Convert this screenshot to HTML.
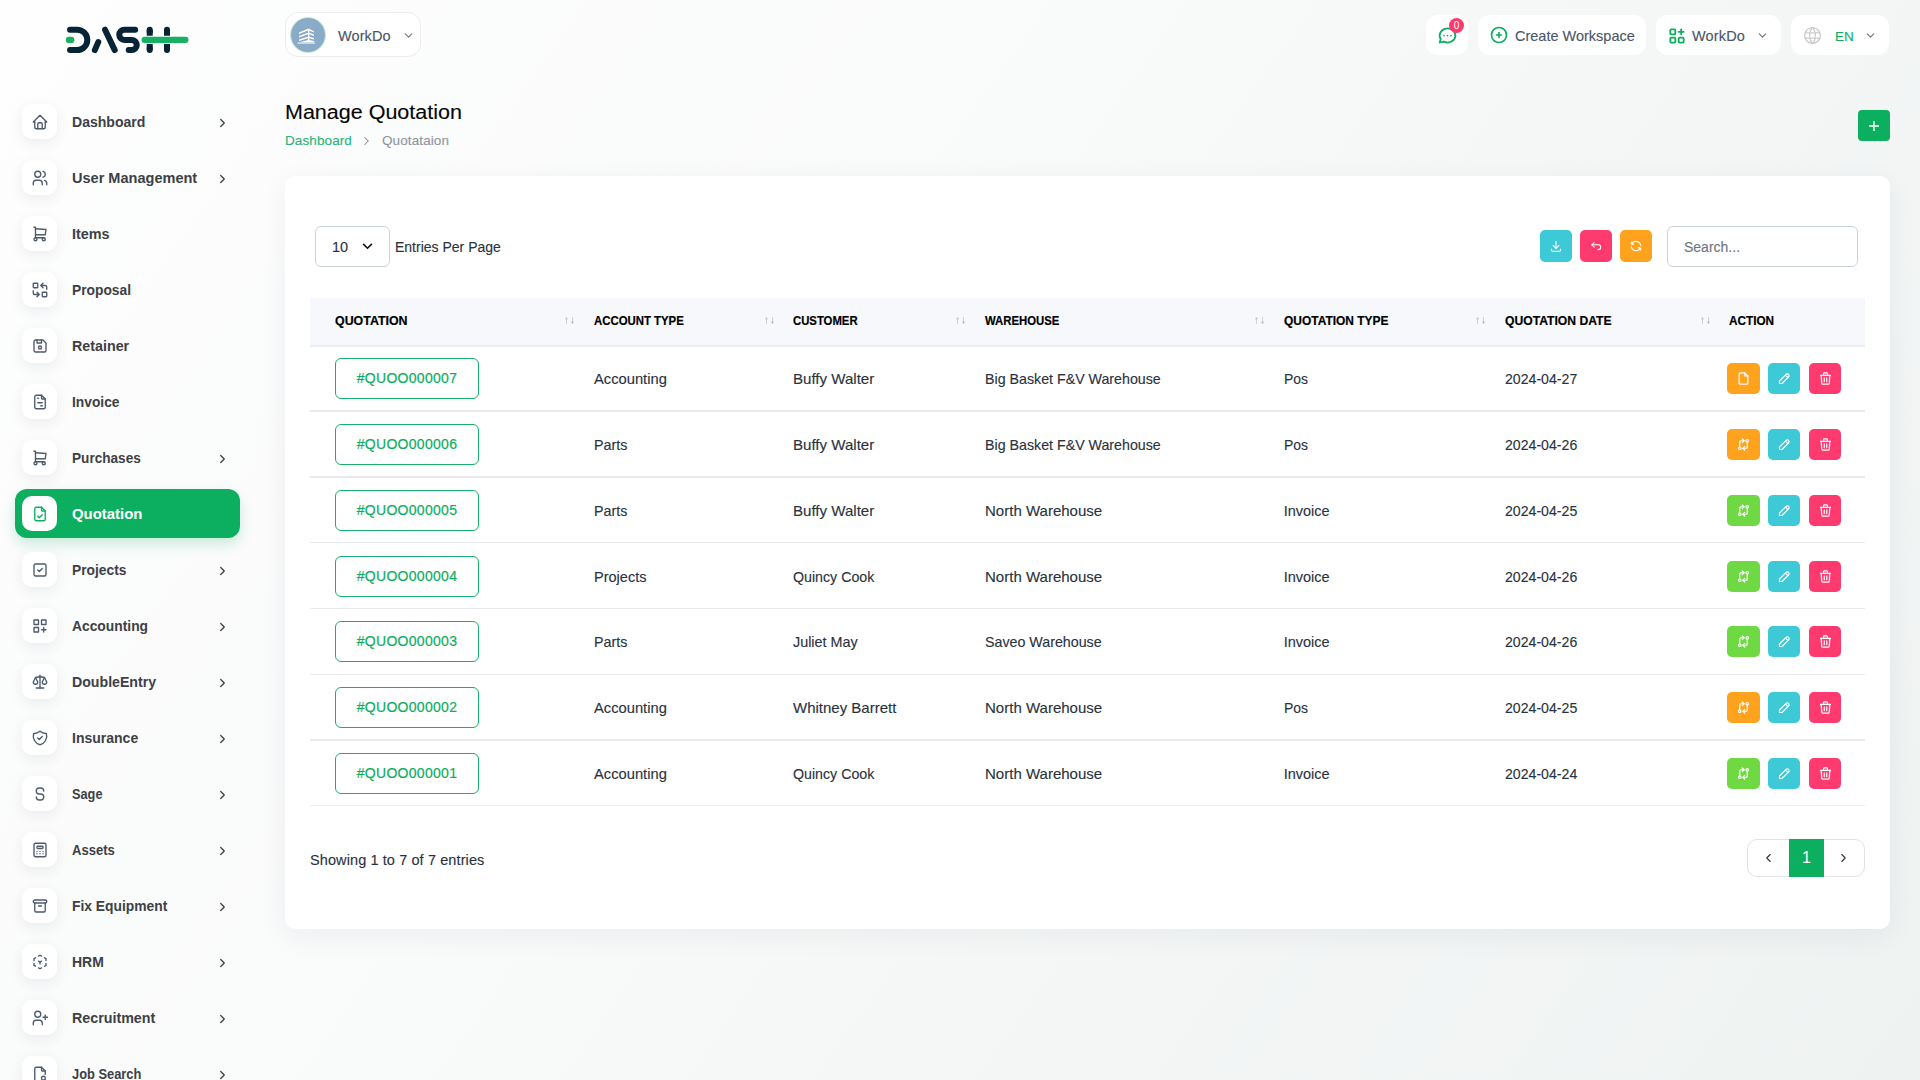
<!DOCTYPE html>
<html><head><meta charset="utf-8">
<style>
*{box-sizing:border-box;margin:0;padding:0}
html,body{width:1920px;height:1080px;overflow:hidden}
body{font-family:"Liberation Sans",sans-serif;color:#293240;position:relative;
background:linear-gradient(125deg,#fefefe 0%,#f9fafa 40%,#eef2f1 100%);}
svg.i{fill:none;stroke:currentColor;stroke-linecap:round;stroke-linejoin:round}
.nav{position:absolute;left:15px;width:225px;height:49px;border-radius:12px}
.nav .ib{position:absolute;left:7px;top:7px;width:35px;height:35px;border-radius:10px;background:#fff;
box-shadow:0 4px 14px rgba(60,70,90,.09);color:#4e5a6e}
.nav .ib svg{position:absolute;left:8.5px;top:8.5px;width:18px;height:18px;stroke-width:1.8}
.nav .t{position:absolute;left:57px;top:-0.5px;line-height:49px;font-size:15px;font-weight:700;color:#3d4046;letter-spacing:0;white-space:nowrap;transform-origin:0 0}
.nav .ch{position:absolute;left:204px;top:21px;width:7px;height:10px;color:#3a3d42;stroke-width:2.2}
.nav.act{background:#0cae5f;box-shadow:0 6px 14px rgba(12,174,95,.22)}
.nav.act .ib{color:#0cae5f;box-shadow:none}
.nav.act .t{color:#fff}
.pill{position:absolute;background:#fff;border-radius:12px;height:40px;top:15px}
.card{position:absolute;left:285px;top:176px;width:1605px;height:753px;background:#fff;border-radius:10px;
box-shadow:0 6px 30px rgba(30,40,60,.06)}
.th{position:absolute;top:296.5px;height:48px;font-size:13px;font-weight:700;color:#000;-webkit-text-stroke:.2px #000;line-height:48px;letter-spacing:0;white-space:nowrap;transform-origin:0 0}
.sort{position:absolute;top:316px;width:10px;height:9px}
.cell{position:absolute;font-size:14.5px;line-height:18px;color:#293240;-webkit-text-stroke:.12px #293240;letter-spacing:0;white-space:nowrap;transform-origin:0 0}
.badge{position:absolute;left:335px;width:144px;height:41px;border:1.5px solid #16b06a;border-radius:6px;color:#0cae5f;-webkit-text-stroke:.2px #0cae5f;
font-size:14px;line-height:39.5px;text-align:center;letter-spacing:.3px}
.ab{position:absolute;width:32px;height:31px;border-radius:5px}
.ab svg{position:absolute;left:8.5px;top:8px;width:15px;height:15px;stroke:#fff;stroke-width:1.9}
.rl{position:absolute;left:310px;width:1555px;height:1.5px;background:#e8eaee}
.tb{position:absolute;top:230px;width:32px;height:32px;border-radius:5px}
.tb svg{position:absolute;left:9px;top:9px;width:14px;height:14px;stroke:#fff;stroke-width:1.8}
.txt{position:absolute;white-space:nowrap;-webkit-text-stroke-width:.12px}
</style></head><body>
<!-- LOGO -->
<svg style="position:absolute;left:58px;top:18px;width:140px;height:44px" viewBox="0 0 1920 603">
<g fill="none" stroke-linecap="round" stroke-width="82">
<path d="M150 300H182" stroke="#17b163" stroke-width="86"/>
<path d="M165 160H262A140 140 0 0 1 262 440H165" stroke="#062435"/>
<path d="M505 440L552 330" stroke="#062435"/>
<path d="M645 160L778 440" stroke="#062435"/>
<path d="M1058 160H910A70 70 0 0 0 910 300H1010A70 70 0 0 1 1010 440H970" stroke="#062435"/>
<path d="M1258 160V190M1258 410V440M1495 160V190M1495 410V440" stroke="#062435"/>
<path d="M1258 160V242M1258 358V440M1495 160V242M1495 358V440" stroke="#062435" stroke-linecap="butt"/>
</g>
<path d="M1188 300H1748" stroke="#17b163" stroke-width="84" stroke-linecap="round"/>
</svg>
<div class="nav" style="top:97.0px"><div class="ib"><svg class="i" viewBox="0 0 24 24" style=""><path d="M5 12l-2 0l9 -9l9 9l-2 0"/><path d="M5 12v7a2 2 0 0 0 2 2h10a2 2 0 0 0 2 -2v-7"/><path d="M9 21v-6a2 2 0 0 1 2 -2h2a2 2 0 0 1 2 2v6"/></svg></div><div class="t" style="transform:scaleX(0.937)">Dashboard</div><svg class="i ch" viewBox="6 4 12 16"><path d="M9 6l6 6l-6 6"/></svg></div>
<div class="nav" style="top:153.0px"><div class="ib"><svg class="i" viewBox="0 0 24 24" style=""><path d="M5 7a4 4 0 1 0 8 0a4 4 0 1 0 -8 0"/><path d="M3 21v-2a4 4 0 0 1 4 -4h4a4 4 0 0 1 4 4v2"/><path d="M16 3.13a4 4 0 0 1 0 7.75"/><path d="M21 21v-2a4 4 0 0 0 -3 -3.85"/></svg></div><div class="t" style="transform:scaleX(0.969)">User Management</div><svg class="i ch" viewBox="6 4 12 16"><path d="M9 6l6 6l-6 6"/></svg></div>
<div class="nav" style="top:209.0px"><div class="ib"><svg class="i" viewBox="0 0 24 24" style=""><path d="M4 19a2 2 0 1 0 4 0a2 2 0 1 0 -4 0"/><path d="M15 19a2 2 0 1 0 4 0a2 2 0 1 0 -4 0"/><path d="M17 17h-11v-14h-2"/><path d="M6 5l14 1l-1 7h-13"/></svg></div><div class="t" style="transform:scaleX(0.959)">Items</div></div>
<div class="nav" style="top:265.0px"><div class="ib"><svg class="i" viewBox="0 0 24 24" style=""><path d="M4 3h4a1 1 0 0 1 1 1v4a1 1 0 0 1 -1 1h-4a1 1 0 0 1 -1 -1v-4a1 1 0 0 1 1 -1z"/><path d="M16 15h4a1 1 0 0 1 1 1v4a1 1 0 0 1 -1 1h-4a1 1 0 0 1 -1 -1v-4a1 1 0 0 1 1 -1z"/><path d="M21 11v-3a2 2 0 0 0 -2 -2h-6l3 3m0 -6l-3 3"/><path d="M3 13v3a2 2 0 0 0 2 2h6l-3 -3m0 6l3 -3"/></svg></div><div class="t" style="transform:scaleX(0.92)">Proposal</div></div>
<div class="nav" style="top:321.0px"><div class="ib"><svg class="i" viewBox="0 0 24 24" style=""><path d="M6 4h10l4 4v10a2 2 0 0 1 -2 2h-12a2 2 0 0 1 -2 -2v-12a2 2 0 0 1 2 -2"/><path d="M10 14a2 2 0 1 0 4 0a2 2 0 1 0 -4 0"/><path d="M14 4l0 4l-6 0l0 -4"/></svg></div><div class="t" style="transform:scaleX(0.952)">Retainer</div></div>
<div class="nav" style="top:377.0px"><div class="ib"><svg class="i" viewBox="0 0 24 24" style=""><path d="M14 3v4a1 1 0 0 0 1 1h4"/><path d="M17 21h-10a2 2 0 0 1 -2 -2v-14a2 2 0 0 1 2 -2h7l5 5v11a2 2 0 0 1 -2 2z"/><path d="M9 7l1 0"/><path d="M9 13l6 0"/><path d="M13 17l2 0"/></svg></div><div class="t" style="transform:scaleX(0.919)">Invoice</div></div>
<div class="nav" style="top:433.0px"><div class="ib"><svg class="i" viewBox="0 0 24 24" style=""><path d="M4 19a2 2 0 1 0 4 0a2 2 0 1 0 -4 0"/><path d="M15 19a2 2 0 1 0 4 0a2 2 0 1 0 -4 0"/><path d="M17 17h-11v-14h-2"/><path d="M6 5l14 1l-1 7h-13"/></svg></div><div class="t" style="transform:scaleX(0.907)">Purchases</div><svg class="i ch" viewBox="6 4 12 16"><path d="M9 6l6 6l-6 6"/></svg></div>
<div class="nav act" style="top:489.0px"><div class="ib"><svg class="i" viewBox="0 0 24 24" style=""><path d="M14 3v4a1 1 0 0 0 1 1h4"/><path d="M17 21h-10a2 2 0 0 1 -2 -2v-14a2 2 0 0 1 2 -2h7l5 5v11a2 2 0 0 1 -2 2z"/><path d="M9 15l2 2l4 -4"/></svg></div><div class="t" style="transform:scaleX(0.994)">Quotation</div></div>
<div class="nav" style="top:545.0px"><div class="ib"><svg class="i" viewBox="0 0 24 24" style=""><path d="M6 4h12a2 2 0 0 1 2 2v12a2 2 0 0 1 -2 2h-12a2 2 0 0 1 -2 -2v-12a2 2 0 0 1 2 -2z"/><path d="M9 12l2 2l4 -4"/></svg></div><div class="t" style="transform:scaleX(0.919)">Projects</div><svg class="i ch" viewBox="6 4 12 16"><path d="M9 6l6 6l-6 6"/></svg></div>
<div class="nav" style="top:601.0px"><div class="ib"><svg class="i" viewBox="0 0 24 24" style=""><path d="M4 4h6v6h-6z"/><path d="M14 4h6v6h-6z"/><path d="M4 14h6v6h-6z"/><path d="M17 14v6"/><path d="M14 17h6"/></svg></div><div class="t" style="transform:scaleX(0.922)">Accounting</div><svg class="i ch" viewBox="6 4 12 16"><path d="M9 6l6 6l-6 6"/></svg></div>
<div class="nav" style="top:657.0px"><div class="ib"><svg class="i" viewBox="0 0 24 24" style=""><path d="M7 20l10 0"/><path d="M6 6l6 -1l6 1"/><path d="M12 3l0 17"/><path d="M9 12l-3 -6l-3 6a3 3 0 0 0 6 0"/><path d="M21 12l-3 -6l-3 6a3 3 0 0 0 6 0"/></svg></div><div class="t" style="transform:scaleX(0.943)">DoubleEntry</div><svg class="i ch" viewBox="6 4 12 16"><path d="M9 6l6 6l-6 6"/></svg></div>
<div class="nav" style="top:713.0px"><div class="ib"><svg class="i" viewBox="0 0 24 24" style=""><path d="M9 12l2 2l4 -4"/><path d="M12 3a12 12 0 0 0 8.5 3a12 12 0 0 1 -8.5 15a12 12 0 0 1 -8.5 -15a12 12 0 0 0 8.5 -3"/></svg></div><div class="t" style="transform:scaleX(0.934)">Insurance</div><svg class="i ch" viewBox="6 4 12 16"><path d="M9 6l6 6l-6 6"/></svg></div>
<div class="nav" style="top:769.0px"><div class="ib"><svg class="i" viewBox="0 0 24 24" style=""><path d="M17 8a4 4 0 0 0 -4 -4h-2a4 4 0 0 0 0 8h2a4 4 0 0 1 0 8h-2a4 4 0 0 1 -4 -4"/></svg></div><div class="t" style="transform:scaleX(0.85)">Sage</div><svg class="i ch" viewBox="6 4 12 16"><path d="M9 6l6 6l-6 6"/></svg></div>
<div class="nav" style="top:825.0px"><div class="ib"><svg class="i" viewBox="0 0 24 24" style=""><path d="M6 3h12a2 2 0 0 1 2 2v14a2 2 0 0 1 -2 2h-12a2 2 0 0 1 -2 -2v-14a2 2 0 0 1 2 -2z"/><path d="M9 7h6a1 1 0 0 1 1 1v1a1 1 0 0 1 -1 1h-6a1 1 0 0 1 -1 -1v-1a1 1 0 0 1 1 -1z"/><path d="M8 14l0 .01"/><path d="M12 14l0 .01"/><path d="M16 14l0 .01"/><path d="M8 17l0 .01"/><path d="M12 17l0 .01"/><path d="M16 17l0 .01"/></svg></div><div class="t" style="transform:scaleX(0.871)">Assets</div><svg class="i ch" viewBox="6 4 12 16"><path d="M9 6l6 6l-6 6"/></svg></div>
<div class="nav" style="top:881.0px"><div class="ib"><svg class="i" viewBox="0 0 24 24" style=""><path d="M5 4h14a2 2 0 0 1 2 2a2 2 0 0 1 -2 2h-14a2 2 0 0 1 -2 -2a2 2 0 0 1 2 -2z"/><path d="M5 8v10a2 2 0 0 0 2 2h10a2 2 0 0 0 2 -2v-10"/><path d="M10 12l4 0"/></svg></div><div class="t" style="transform:scaleX(0.923)">Fix Equipment</div><svg class="i ch" viewBox="6 4 12 16"><path d="M9 6l6 6l-6 6"/></svg></div>
<div class="nav" style="top:937.0px"><div class="ib"><svg class="i" viewBox="0 0 24 24" style=""><path d="M6 17.6l-2 -1.1v-2.5"/><path d="M4 10v-2.5l2 -1.1"/><path d="M10 4.1l2 -1.1l2 1.1"/><path d="M18 6.4l2 1.1v2.5"/><path d="M20 14v2.5l-2 1.12"/><path d="M14 19.9l-2 1.1l-2 -1.1"/><path d="M12 12l2 -1.1"/><path d="M12 12l0 2.5"/><path d="M12 12l-2 -1.12"/></svg></div><div class="t" style="transform:scaleX(0.932)">HRM</div><svg class="i ch" viewBox="6 4 12 16"><path d="M9 6l6 6l-6 6"/></svg></div>
<div class="nav" style="top:993.0px"><div class="ib"><svg class="i" viewBox="0 0 24 24" style=""><path d="M5 7a4 4 0 1 0 8 0a4 4 0 1 0 -8 0"/><path d="M3 21v-2a4 4 0 0 1 4 -4h4a4 4 0 0 1 4 4v2"/><path d="M16 11h6m-3 -3v6"/></svg></div><div class="t" style="transform:scaleX(0.951)">Recruitment</div><svg class="i ch" viewBox="6 4 12 16"><path d="M9 6l6 6l-6 6"/></svg></div>
<div class="nav" style="top:1049.0px"><div class="ib"><svg class="i" viewBox="0 0 24 24" style=""><path d="M14 3v4a1 1 0 0 0 1 1h4"/><path d="M12 21h-5a2 2 0 0 1 -2 -2v-14a2 2 0 0 1 2 -2h7l5 5v4.5"/><path d="M14 17.5a2.5 2.5 0 1 0 5 0a2.5 2.5 0 1 0 -5 0"/><path d="M18.5 19.5l2.5 2.5"/></svg></div><div class="t" style="transform:scaleX(0.857)">Job Search</div><svg class="i ch" viewBox="6 4 12 16"><path d="M9 6l6 6l-6 6"/></svg></div>
<!-- workspace -->
<div class="pill" style="left:285px;top:12px;width:136px;height:45px;border:1px solid #ececec;border-radius:13px"></div>
<div style="position:absolute;left:291px;top:18px;width:34px;height:34px;border-radius:50%;background:#8aabc7;box-shadow:0 0 0 1px #c9ecd6">
<svg viewBox="0 0 34 34" style="position:absolute;left:0;top:0;width:34px;height:34px"><g fill="#fff">
<path d="M8 14.5L17.5 10.5L23 13.2V14.6L17.5 12.2L8 16Z"/><path d="M8 18L17.5 14.5L23 16.5V17.9L17.5 15.9L8 19.5Z"/>
<path d="M8 21.5L17.5 18.5L23 20V21.4L17.5 19.9L8 23Z"/><path d="M7.5 24.5L17.5 22L23 23V24.2H7.5Z"/>
<rect x="17" y="11" width="1.3" height="13" /><rect x="6.5" y="24.3" width="17.5" height="1.6" opacity=".6"/></g></svg></div>
<div class="txt" style="left:338px;top:28px;font-size:14.5px;color:#4a5568;letter-spacing:.1px">WorkDo</div>
<svg class="i" viewBox="0 0 24 24" style="position:absolute;left:402px;top:29px;width:13px;height:13px;color:#6b7280;stroke-width:2"><path d="M6 9l6 6l6 -6"/></svg>
<!-- right header -->
<div class="pill" style="left:1426px;width:42px"></div>
<svg class="i" viewBox="0 0 24 24" style="position:absolute;left:1437px;top:25px;width:21px;height:21px;color:#0cae5f;stroke-width:2"><path d="M3 20l1.3 -3.9a9 8 0 1 1 3.4 2.9l-4.7 1"/><path d="M12 12l0 .01"/><path d="M8 12l0 .01"/><path d="M16 12l0 .01"/></svg>
<div style="position:absolute;left:1449px;top:17.5px;width:15px;height:15px;border-radius:50%;background:#ff3a6e;color:#fff;font-size:10px;line-height:15px;text-align:center">0</div>
<div class="pill" style="left:1478px;width:168px"></div>
<svg class="i" viewBox="0 0 24 24" style="position:absolute;left:1489px;top:25px;width:20px;height:20px;color:#0cae5f;stroke-width:2"><path d="M3 12a9 9 0 1 0 18 0a9 9 0 0 0 -18 0"/><path d="M9 12h6"/><path d="M12 9v6"/></svg>
<div class="txt" style="left:1515px;top:28px;font-size:14.5px;color:#4a5568;letter-spacing:0">Create Workspace</div>
<div class="pill" style="left:1656px;width:125px"></div>
<svg class="i" viewBox="0 0 24 24" style="position:absolute;left:1667px;top:26px;width:20px;height:20px;color:#0cae5f;stroke-width:2.2"><path d="M5 4h4a1 1 0 0 1 1 1v4a1 1 0 0 1 -1 1h-4a1 1 0 0 1 -1 -1v-4a1 1 0 0 1 1 -1z"/><path d="M5 14h4a1 1 0 0 1 1 1v4a1 1 0 0 1 -1 1h-4a1 1 0 0 1 -1 -1v-4a1 1 0 0 1 1 -1z"/><path d="M15 14h4a1 1 0 0 1 1 1v4a1 1 0 0 1 -1 1h-4a1 1 0 0 1 -1 -1v-4a1 1 0 0 1 1 -1z"/><path d="M14 7l6 0"/><path d="M17 4l0 6"/></svg>
<div class="txt" style="left:1692px;top:28px;font-size:14.5px;color:#4a5568;letter-spacing:.15px">WorkDo</div>
<svg class="i" viewBox="0 0 24 24" style="position:absolute;left:1756px;top:29px;width:13px;height:13px;color:#6b7280;stroke-width:2"><path d="M6 9l6 6l6 -6"/></svg>
<div class="pill" style="left:1791px;width:98px"></div>
<svg class="i" viewBox="0 0 24 24" style="position:absolute;left:1801.5px;top:25px;width:21px;height:21px;color:#cbcbcb;stroke-width:1.5"><path d="M3 12a9 9 0 1 0 18 0a9 9 0 0 0 -18 0"/><path d="M3.6 9h16.8"/><path d="M3.6 15h16.8"/><path d="M11.5 3a17 17 0 0 0 0 18"/><path d="M12.5 3a17 17 0 0 1 0 18"/></svg>
<div class="txt" style="left:1835px;top:28.5px;font-size:13.5px;color:#0cae5f">EN</div>
<svg class="i" viewBox="0 0 24 24" style="position:absolute;left:1864px;top:29px;width:13px;height:13px;color:#6b7280;stroke-width:2"><path d="M6 9l6 6l6 -6"/></svg>
<!-- title -->
<div class="txt" style="left:285px;top:101px;font-size:20px;color:#060606;letter-spacing:0;transform:scaleX(1.075);transform-origin:0 0">Manage Quotation</div>
<div class="txt" style="left:285px;top:133px;font-size:13.5px;color:#27b478;letter-spacing:.1px">Dashboard</div>
<svg class="i" viewBox="6 4 12 16" style="position:absolute;left:363px;top:136px;width:7px;height:10px;color:#7e8793;stroke-width:1.8"><path d="M9 6l6 6l-6 6"/></svg>
<div class="txt" style="left:382px;top:133px;font-size:13.5px;color:#8e96a2;letter-spacing:.1px">Quotataion</div>
<div style="position:absolute;left:1858px;top:110px;width:32px;height:31px;border-radius:4px;background:#0cae5f">
<svg viewBox="0 0 10 10" style="position:absolute;left:11px;top:10.5px;width:10px;height:10px"><path d="M5 0V10M0 5H10" stroke="#fff" stroke-width="1.4"/></svg></div>
<!-- card -->
<div class="card"></div>
<div style="position:absolute;left:315px;top:226px;width:75px;height:41px;border:1px solid #cdd3db;border-radius:6px"></div>
<div class="txt" style="left:332px;top:239px;font-size:14.5px;color:#293240">10</div>
<svg viewBox="0 0 12 8" style="position:absolute;left:362px;top:243px;width:11px;height:7px"><path d="M1 1L6 6L11 1" stroke="#111" stroke-width="1.8" fill="none"/></svg>
<div class="txt" style="left:395px;top:239px;font-size:14px;color:#293240;letter-spacing:0">Entries Per Page</div>
<div class="tb" style="left:1540px;background:#3ec9d6"><svg class="i" viewBox="0 0 24 24" style=""><path d="M4 17v2a2 2 0 0 0 2 2h12a2 2 0 0 0 2 -2v-2"/><path d="M7 11l5 5l5 -5"/><path d="M12 4l0 12"/></svg></div>
<div class="tb" style="left:1580px;background:#ff3a6e"><svg class="i" viewBox="0 0 24 24" style=""><path d="M9 14l-4 -4l4 -4"/><path d="M5 10h11a4 4 0 1 1 0 8h-1"/></svg></div>
<div class="tb" style="left:1620px;background:#ffa21d"><svg class="i" viewBox="0 0 24 24" style=""><path d="M20 11a8.1 8.1 0 0 0 -15.5 -2m-.5 -4v4h4"/><path d="M4 13a8.1 8.1 0 0 0 15.5 2m.5 4v-4h-4"/></svg></div>
<div style="position:absolute;left:1667px;top:226px;width:191px;height:41px;border:1px solid #cdd3db;border-radius:6px"></div>
<div class="txt" style="left:1684px;top:239px;font-size:14px;color:#6c7683;letter-spacing:0">Search...</div>
<div style="position:absolute;left:310px;top:298px;width:1555px;height:48px;background:#f7f8fb"></div>
<div style="position:absolute;left:310px;top:345px;width:1555px;height:1.5px;background:#eceef2"></div>
<div class="th" style="left:335.3px;transform:scaleX(0.954)">QUOTATION</div>
<svg class="sort" style="left:565px" viewBox="0 0 10 9"><path d="M1.5 3V8" stroke="#cfd2d8" stroke-width="1"/><path d="M-0.2 3.2L1.5 1L3.2 3.2Z" fill="#c2c5cc"/><path d="M7.5 1V6" stroke="#cfd2d8" stroke-width="1"/><path d="M5.8 5.8L7.5 8L9.2 5.8Z" fill="#b4b8c0"/></svg>
<div class="th" style="left:593.6px;transform:scaleX(0.875)">ACCOUNT TYPE</div>
<svg class="sort" style="left:764.5px" viewBox="0 0 10 9"><path d="M1.5 3V8" stroke="#cfd2d8" stroke-width="1"/><path d="M-0.2 3.2L1.5 1L3.2 3.2Z" fill="#c2c5cc"/><path d="M7.5 1V6" stroke="#cfd2d8" stroke-width="1"/><path d="M5.8 5.8L7.5 8L9.2 5.8Z" fill="#b4b8c0"/></svg>
<div class="th" style="left:793.3px;transform:scaleX(0.871)">CUSTOMER</div>
<svg class="sort" style="left:955.7px" viewBox="0 0 10 9"><path d="M1.5 3V8" stroke="#cfd2d8" stroke-width="1"/><path d="M-0.2 3.2L1.5 1L3.2 3.2Z" fill="#c2c5cc"/><path d="M7.5 1V6" stroke="#cfd2d8" stroke-width="1"/><path d="M5.8 5.8L7.5 8L9.2 5.8Z" fill="#b4b8c0"/></svg>
<div class="th" style="left:984.6px;transform:scaleX(0.871)">WAREHOUSE</div>
<svg class="sort" style="left:1254.6px" viewBox="0 0 10 9"><path d="M1.5 3V8" stroke="#cfd2d8" stroke-width="1"/><path d="M-0.2 3.2L1.5 1L3.2 3.2Z" fill="#c2c5cc"/><path d="M7.5 1V6" stroke="#cfd2d8" stroke-width="1"/><path d="M5.8 5.8L7.5 8L9.2 5.8Z" fill="#b4b8c0"/></svg>
<div class="th" style="left:1283.7px;transform:scaleX(0.920)">QUOTATION TYPE</div>
<svg class="sort" style="left:1475.9px" viewBox="0 0 10 9"><path d="M1.5 3V8" stroke="#cfd2d8" stroke-width="1"/><path d="M-0.2 3.2L1.5 1L3.2 3.2Z" fill="#c2c5cc"/><path d="M7.5 1V6" stroke="#cfd2d8" stroke-width="1"/><path d="M5.8 5.8L7.5 8L9.2 5.8Z" fill="#b4b8c0"/></svg>
<div class="th" style="left:1504.8px;transform:scaleX(0.934)">QUOTATION DATE</div>
<svg class="sort" style="left:1700.6px" viewBox="0 0 10 9"><path d="M1.5 3V8" stroke="#cfd2d8" stroke-width="1"/><path d="M-0.2 3.2L1.5 1L3.2 3.2Z" fill="#c2c5cc"/><path d="M7.5 1V6" stroke="#cfd2d8" stroke-width="1"/><path d="M5.8 5.8L7.5 8L9.2 5.8Z" fill="#b4b8c0"/></svg>
<div class="th" style="left:1729.3px;transform:scaleX(0.904)">ACTION</div>
<div class="badge" style="top:358.10px">#QUOO000007</div>
<div class="cell" style="left:593.6px;top:370.40px;transform:scaleX(1.015)">Accounting</div>
<div class="cell" style="left:793.3px;top:370.40px;transform:scaleX(1.039)">Buffy Walter</div>
<div class="cell" style="left:984.6px;top:370.40px;transform:scaleX(0.981)">Big Basket F&amp;V Warehouse</div>
<div class="cell" style="left:1283.7px;top:370.40px;transform:scaleX(0.962)">Pos</div>
<div class="cell" style="left:1504.8px;top:370.40px;transform:scaleX(0.974)">2024-04-27</div>
<div class="ab" style="left:1727px;top:363.10px;width:33px;background:#ffa21d"><svg class="i" viewBox="0 0 24 24" style=""><path d="M14 3v4a1 1 0 0 0 1 1h4"/><path d="M17 21h-10a2 2 0 0 1 -2 -2v-14a2 2 0 0 1 2 -2h7l5 5v11a2 2 0 0 1 -2 2z"/></svg></div>
<div class="ab" style="left:1768px;top:363.10px;width:32px;background:#3ec9d6"><svg class="i" viewBox="0 0 24 24" style=""><path d="M4 20h4l10.5 -10.5a2.828 2.828 0 1 0 -4 -4l-10.5 10.5v4"/><path d="M13.5 6.5l4 4"/></svg></div>
<div class="ab" style="left:1809px;top:363.10px;width:32px;background:#ff3a6e"><svg class="i" viewBox="0 0 24 24" style=""><path d="M4 7l16 0"/><path d="M10 11l0 6"/><path d="M14 11l0 6"/><path d="M5 7l1 12a2 2 0 0 0 2 2h8a2 2 0 0 0 2 -2l1 -12"/><path d="M9 7v-3a1 1 0 0 1 1 -1h4a1 1 0 0 1 1 1v3"/></svg></div>
<div class="rl" style="top:410.30px"></div>
<div class="badge" style="top:423.90px">#QUOO000006</div>
<div class="cell" style="left:593.6px;top:436.12px;transform:scaleX(0.985)">Parts</div>
<div class="cell" style="left:793.3px;top:436.12px;transform:scaleX(1.039)">Buffy Walter</div>
<div class="cell" style="left:984.6px;top:436.12px;transform:scaleX(0.981)">Big Basket F&amp;V Warehouse</div>
<div class="cell" style="left:1283.7px;top:436.12px;transform:scaleX(0.962)">Pos</div>
<div class="cell" style="left:1504.8px;top:436.12px;transform:scaleX(0.974)">2024-04-26</div>
<div class="ab" style="left:1727px;top:428.90px;width:33px;background:#ffa21d"><svg class="i" viewBox="0 0 24 24" style=""><g transform="translate(24 0) scale(-1 1)"><path d="M4 6a2 2 0 1 0 4 0a2 2 0 1 0 -4 0"/><path d="M16 18a2 2 0 1 0 4 0a2 2 0 1 0 -4 0"/><path d="M11 6h5a2 2 0 0 1 2 2v8"/><path d="M14 9l-3 -3l3 -3"/><path d="M13 18h-5a2 2 0 0 1 -2 -2v-8"/><path d="M10 15l3 3l-3 3"/></g></svg></div>
<div class="ab" style="left:1768px;top:428.90px;width:32px;background:#3ec9d6"><svg class="i" viewBox="0 0 24 24" style=""><path d="M4 20h4l10.5 -10.5a2.828 2.828 0 1 0 -4 -4l-10.5 10.5v4"/><path d="M13.5 6.5l4 4"/></svg></div>
<div class="ab" style="left:1809px;top:428.90px;width:32px;background:#ff3a6e"><svg class="i" viewBox="0 0 24 24" style=""><path d="M4 7l16 0"/><path d="M10 11l0 6"/><path d="M14 11l0 6"/><path d="M5 7l1 12a2 2 0 0 0 2 2h8a2 2 0 0 0 2 -2l1 -12"/><path d="M9 7v-3a1 1 0 0 1 1 -1h4a1 1 0 0 1 1 1v3"/></svg></div>
<div class="rl" style="top:476.10px"></div>
<div class="badge" style="top:489.70px">#QUOO000005</div>
<div class="cell" style="left:593.6px;top:501.84px;transform:scaleX(0.985)">Parts</div>
<div class="cell" style="left:793.3px;top:501.84px;transform:scaleX(1.039)">Buffy Walter</div>
<div class="cell" style="left:984.6px;top:501.84px;transform:scaleX(1.036)">North Warehouse</div>
<div class="cell" style="left:1283.7px;top:501.84px;transform:scaleX(1.0)">Invoice</div>
<div class="cell" style="left:1504.8px;top:501.84px;transform:scaleX(0.974)">2024-04-25</div>
<div class="ab" style="left:1727px;top:494.70px;width:33px;background:#6fd943"><svg class="i" viewBox="0 0 24 24" style=""><g transform="translate(24 0) scale(-1 1)"><path d="M4 6a2 2 0 1 0 4 0a2 2 0 1 0 -4 0"/><path d="M16 18a2 2 0 1 0 4 0a2 2 0 1 0 -4 0"/><path d="M11 6h5a2 2 0 0 1 2 2v8"/><path d="M14 9l-3 -3l3 -3"/><path d="M13 18h-5a2 2 0 0 1 -2 -2v-8"/><path d="M10 15l3 3l-3 3"/></g></svg></div>
<div class="ab" style="left:1768px;top:494.70px;width:32px;background:#3ec9d6"><svg class="i" viewBox="0 0 24 24" style=""><path d="M4 20h4l10.5 -10.5a2.828 2.828 0 1 0 -4 -4l-10.5 10.5v4"/><path d="M13.5 6.5l4 4"/></svg></div>
<div class="ab" style="left:1809px;top:494.70px;width:32px;background:#ff3a6e"><svg class="i" viewBox="0 0 24 24" style=""><path d="M4 7l16 0"/><path d="M10 11l0 6"/><path d="M14 11l0 6"/><path d="M5 7l1 12a2 2 0 0 0 2 2h8a2 2 0 0 0 2 -2l1 -12"/><path d="M9 7v-3a1 1 0 0 1 1 -1h4a1 1 0 0 1 1 1v3"/></svg></div>
<div class="rl" style="top:541.90px"></div>
<div class="badge" style="top:555.50px">#QUOO000004</div>
<div class="cell" style="left:593.6px;top:567.56px;transform:scaleX(1.002)">Projects</div>
<div class="cell" style="left:793.3px;top:567.56px;transform:scaleX(0.98)">Quincy Cook</div>
<div class="cell" style="left:984.6px;top:567.56px;transform:scaleX(1.036)">North Warehouse</div>
<div class="cell" style="left:1283.7px;top:567.56px;transform:scaleX(1.0)">Invoice</div>
<div class="cell" style="left:1504.8px;top:567.56px;transform:scaleX(0.974)">2024-04-26</div>
<div class="ab" style="left:1727px;top:560.50px;width:33px;background:#6fd943"><svg class="i" viewBox="0 0 24 24" style=""><g transform="translate(24 0) scale(-1 1)"><path d="M4 6a2 2 0 1 0 4 0a2 2 0 1 0 -4 0"/><path d="M16 18a2 2 0 1 0 4 0a2 2 0 1 0 -4 0"/><path d="M11 6h5a2 2 0 0 1 2 2v8"/><path d="M14 9l-3 -3l3 -3"/><path d="M13 18h-5a2 2 0 0 1 -2 -2v-8"/><path d="M10 15l3 3l-3 3"/></g></svg></div>
<div class="ab" style="left:1768px;top:560.50px;width:32px;background:#3ec9d6"><svg class="i" viewBox="0 0 24 24" style=""><path d="M4 20h4l10.5 -10.5a2.828 2.828 0 1 0 -4 -4l-10.5 10.5v4"/><path d="M13.5 6.5l4 4"/></svg></div>
<div class="ab" style="left:1809px;top:560.50px;width:32px;background:#ff3a6e"><svg class="i" viewBox="0 0 24 24" style=""><path d="M4 7l16 0"/><path d="M10 11l0 6"/><path d="M14 11l0 6"/><path d="M5 7l1 12a2 2 0 0 0 2 2h8a2 2 0 0 0 2 -2l1 -12"/><path d="M9 7v-3a1 1 0 0 1 1 -1h4a1 1 0 0 1 1 1v3"/></svg></div>
<div class="rl" style="top:607.70px"></div>
<div class="badge" style="top:621.30px">#QUOO000003</div>
<div class="cell" style="left:593.6px;top:633.28px;transform:scaleX(0.985)">Parts</div>
<div class="cell" style="left:793.3px;top:633.28px;transform:scaleX(0.991)">Juliet May</div>
<div class="cell" style="left:984.6px;top:633.28px;transform:scaleX(0.982)">Saveo Warehouse</div>
<div class="cell" style="left:1283.7px;top:633.28px;transform:scaleX(1.0)">Invoice</div>
<div class="cell" style="left:1504.8px;top:633.28px;transform:scaleX(0.974)">2024-04-26</div>
<div class="ab" style="left:1727px;top:626.30px;width:33px;background:#6fd943"><svg class="i" viewBox="0 0 24 24" style=""><g transform="translate(24 0) scale(-1 1)"><path d="M4 6a2 2 0 1 0 4 0a2 2 0 1 0 -4 0"/><path d="M16 18a2 2 0 1 0 4 0a2 2 0 1 0 -4 0"/><path d="M11 6h5a2 2 0 0 1 2 2v8"/><path d="M14 9l-3 -3l3 -3"/><path d="M13 18h-5a2 2 0 0 1 -2 -2v-8"/><path d="M10 15l3 3l-3 3"/></g></svg></div>
<div class="ab" style="left:1768px;top:626.30px;width:32px;background:#3ec9d6"><svg class="i" viewBox="0 0 24 24" style=""><path d="M4 20h4l10.5 -10.5a2.828 2.828 0 1 0 -4 -4l-10.5 10.5v4"/><path d="M13.5 6.5l4 4"/></svg></div>
<div class="ab" style="left:1809px;top:626.30px;width:32px;background:#ff3a6e"><svg class="i" viewBox="0 0 24 24" style=""><path d="M4 7l16 0"/><path d="M10 11l0 6"/><path d="M14 11l0 6"/><path d="M5 7l1 12a2 2 0 0 0 2 2h8a2 2 0 0 0 2 -2l1 -12"/><path d="M9 7v-3a1 1 0 0 1 1 -1h4a1 1 0 0 1 1 1v3"/></svg></div>
<div class="rl" style="top:673.50px"></div>
<div class="badge" style="top:687.10px">#QUOO000002</div>
<div class="cell" style="left:593.6px;top:699.00px;transform:scaleX(1.015)">Accounting</div>
<div class="cell" style="left:793.3px;top:699.00px;transform:scaleX(1.034)">Whitney Barrett</div>
<div class="cell" style="left:984.6px;top:699.00px;transform:scaleX(1.036)">North Warehouse</div>
<div class="cell" style="left:1283.7px;top:699.00px;transform:scaleX(0.962)">Pos</div>
<div class="cell" style="left:1504.8px;top:699.00px;transform:scaleX(0.974)">2024-04-25</div>
<div class="ab" style="left:1727px;top:692.10px;width:33px;background:#ffa21d"><svg class="i" viewBox="0 0 24 24" style=""><g transform="translate(24 0) scale(-1 1)"><path d="M4 6a2 2 0 1 0 4 0a2 2 0 1 0 -4 0"/><path d="M16 18a2 2 0 1 0 4 0a2 2 0 1 0 -4 0"/><path d="M11 6h5a2 2 0 0 1 2 2v8"/><path d="M14 9l-3 -3l3 -3"/><path d="M13 18h-5a2 2 0 0 1 -2 -2v-8"/><path d="M10 15l3 3l-3 3"/></g></svg></div>
<div class="ab" style="left:1768px;top:692.10px;width:32px;background:#3ec9d6"><svg class="i" viewBox="0 0 24 24" style=""><path d="M4 20h4l10.5 -10.5a2.828 2.828 0 1 0 -4 -4l-10.5 10.5v4"/><path d="M13.5 6.5l4 4"/></svg></div>
<div class="ab" style="left:1809px;top:692.10px;width:32px;background:#ff3a6e"><svg class="i" viewBox="0 0 24 24" style=""><path d="M4 7l16 0"/><path d="M10 11l0 6"/><path d="M14 11l0 6"/><path d="M5 7l1 12a2 2 0 0 0 2 2h8a2 2 0 0 0 2 -2l1 -12"/><path d="M9 7v-3a1 1 0 0 1 1 -1h4a1 1 0 0 1 1 1v3"/></svg></div>
<div class="rl" style="top:739.30px"></div>
<div class="badge" style="top:752.90px">#QUOO000001</div>
<div class="cell" style="left:593.6px;top:764.72px;transform:scaleX(1.015)">Accounting</div>
<div class="cell" style="left:793.3px;top:764.72px;transform:scaleX(0.98)">Quincy Cook</div>
<div class="cell" style="left:984.6px;top:764.72px;transform:scaleX(1.036)">North Warehouse</div>
<div class="cell" style="left:1283.7px;top:764.72px;transform:scaleX(1.0)">Invoice</div>
<div class="cell" style="left:1504.8px;top:764.72px;transform:scaleX(0.974)">2024-04-24</div>
<div class="ab" style="left:1727px;top:757.90px;width:33px;background:#6fd943"><svg class="i" viewBox="0 0 24 24" style=""><g transform="translate(24 0) scale(-1 1)"><path d="M4 6a2 2 0 1 0 4 0a2 2 0 1 0 -4 0"/><path d="M16 18a2 2 0 1 0 4 0a2 2 0 1 0 -4 0"/><path d="M11 6h5a2 2 0 0 1 2 2v8"/><path d="M14 9l-3 -3l3 -3"/><path d="M13 18h-5a2 2 0 0 1 -2 -2v-8"/><path d="M10 15l3 3l-3 3"/></g></svg></div>
<div class="ab" style="left:1768px;top:757.90px;width:32px;background:#3ec9d6"><svg class="i" viewBox="0 0 24 24" style=""><path d="M4 20h4l10.5 -10.5a2.828 2.828 0 1 0 -4 -4l-10.5 10.5v4"/><path d="M13.5 6.5l4 4"/></svg></div>
<div class="ab" style="left:1809px;top:757.90px;width:32px;background:#ff3a6e"><svg class="i" viewBox="0 0 24 24" style=""><path d="M4 7l16 0"/><path d="M10 11l0 6"/><path d="M14 11l0 6"/><path d="M5 7l1 12a2 2 0 0 0 2 2h8a2 2 0 0 0 2 -2l1 -12"/><path d="M9 7v-3a1 1 0 0 1 1 -1h4a1 1 0 0 1 1 1v3"/></svg></div>
<div class="rl" style="top:805.40px;height:1px;background:#eceef1"></div>
<div class="txt" style="left:310px;top:852px;font-size:14.5px;color:#293240;letter-spacing:.1px">Showing 1 to 7 of 7 entries</div>
<div style="position:absolute;left:1747px;top:839px;width:118px;height:38px;border:1px solid #dfe3e8;border-radius:10px"></div>
<div style="position:absolute;left:1789px;top:839px;width:35px;height:38px;background:#0cae5f;color:#fff;font-size:16px;line-height:38px;text-align:center">1</div>
<svg class="i" viewBox="6 4 12 16" style="position:absolute;left:1765px;top:853px;width:7px;height:10px;color:#2d3440;stroke-width:1.9"><path d="M15 6l-6 6l6 6"/></svg>
<svg class="i" viewBox="6 4 12 16" style="position:absolute;left:1840px;top:853px;width:7px;height:10px;color:#2d3440;stroke-width:1.9"><path d="M9 6l6 6l-6 6"/></svg>
</body></html>
